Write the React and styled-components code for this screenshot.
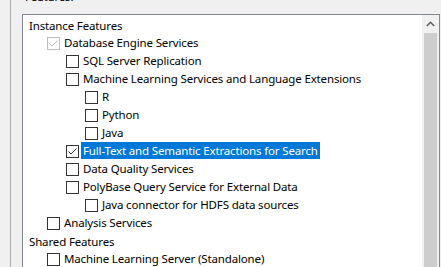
import React from "react";
import styled, { createGlobalStyle } from "styled-components";

const Global = createGlobalStyle`
  html, body { margin: 0; padding: 0; background: #f0f0f0; overflow: hidden; }
  body { font-family: "Noto Sans", "Open Sans", sans-serif; font-size: 11.5px; letter-spacing: -0.15px; color: #000; }
`;

const Page = styled.div`
  width: 441px;
  height: 267px;
  overflow: hidden;
  padding-left: 10px;
  box-sizing: border-box;
`;

const Frame = styled.div`
  border-left: 1px solid #adadad;
  padding-left: 11px;
  padding-right: 1px;
  height: 300px;
`;

const Caption = styled.div`
  height: 16px;
  line-height: 16px;
  margin-top: -11px;
  margin-bottom: 9px;
  padding-left: 3px;
`;

const ListBox = styled.div`
  border: 1px solid #828790;
  background: #fff;
  display: flex;
  height: 280px;
`;

const Content = styled.div`
  flex: 1;
  padding-top: 1px;
`;

const Row = styled.div`
  height: 18px;
  display: flex;
  align-items: center;
  padding-left: ${(p) => (p.$level === 0 ? 6 : 24 + 19 * (p.$level - 1))}px;
  white-space: nowrap;
`;

const Box = styled.span`
  width: 13px;
  height: 13px;
  box-sizing: border-box;
  border: 1px solid ${(p) => (p.$disabled ? "#bcbcbc" : "#333333")};
  background: #fff;
  flex: none;
  display: flex;
  align-items: center;
  justify-content: center;
`;

const Label = styled.span`
  margin-left: 2px;
  padding: 0 2px;
  height: 17px;
  line-height: 17px;
  align-self: flex-start;
  background: ${(p) => (p.$selected ? "#0078d7" : "transparent")};
  color: ${(p) => (p.$selected ? "#fff" : "#000")};
`;

const Heading = styled.span`
  line-height: 17px;
`;

const ScrollBar = styled.div`
  width: 17px;
  background: #f0f0f0;
  display: flex;
  flex-direction: column;
  flex: none;
`;

const ArrowBtn = styled.div`
  height: 17px;
  display: flex;
  align-items: center;
  justify-content: center;
`;

const Thumb = styled.div`
  margin: 1px 2px 0 2px;
  flex: 1;
  background: #cdcdcd;
`;

function Check({ checked, disabled }) {
  return (
    <Box $disabled={disabled}>
      {checked && (
        <svg width="11" height="11" viewBox="0 0 11 11">
          <polyline
            points="1.5,5.5 4,8 9.5,2.5"
            fill="none"
            stroke={disabled ? "#bcbcbc" : "#333333"}
            strokeWidth="1"
          />
        </svg>
      )}
    </Box>
  );
}

const items = [
  { t: "Instance Features", l: 0 },
  { t: "Database Engine Services", l: 1, c: true, d: true },
  { t: "SQL Server Replication", l: 2 },
  { t: "Machine Learning Services and Language Extensions", l: 2 },
  { t: "R", l: 3 },
  { t: "Python", l: 3 },
  { t: "Java", l: 3 },
  { t: "Full-Text and Semantic Extractions for Search", l: 2, c: true, s: true },
  { t: "Data Quality Services", l: 2 },
  { t: "PolyBase Query Service for External Data", l: 2 },
  { t: "Java connector for HDFS data sources", l: 3 },
  { t: "Analysis Services", l: 1 },
  { t: "Shared Features", l: 0 },
  { t: "Machine Learning Server (Standalone)", l: 1 },
];

export default function App() {
  return (
    <Page>
      <Global />
      <Frame>
        <Caption>Features:</Caption>
        <ListBox>
          <Content>
            {items.map((it, i) => (
              <Row key={i} $level={it.l}>
                {it.l === 0 ? (
                  <Heading>{it.t}</Heading>
                ) : (
                  <>
                    <Check checked={it.c} disabled={it.d} />
                    <Label $selected={it.s}>{it.t}</Label>
                  </>
                )}
              </Row>
            ))}
          </Content>
          <ScrollBar>
            <ArrowBtn>
              <svg width="9" height="6" viewBox="0 0 9 6">
                <polyline points="0.8,5 4.5,1.3 8.2,5" fill="none" stroke="#606060" strokeWidth="1.6" />
              </svg>
            </ArrowBtn>
            <Thumb />
          </ScrollBar>
        </ListBox>
      </Frame>
    </Page>
  );
}
